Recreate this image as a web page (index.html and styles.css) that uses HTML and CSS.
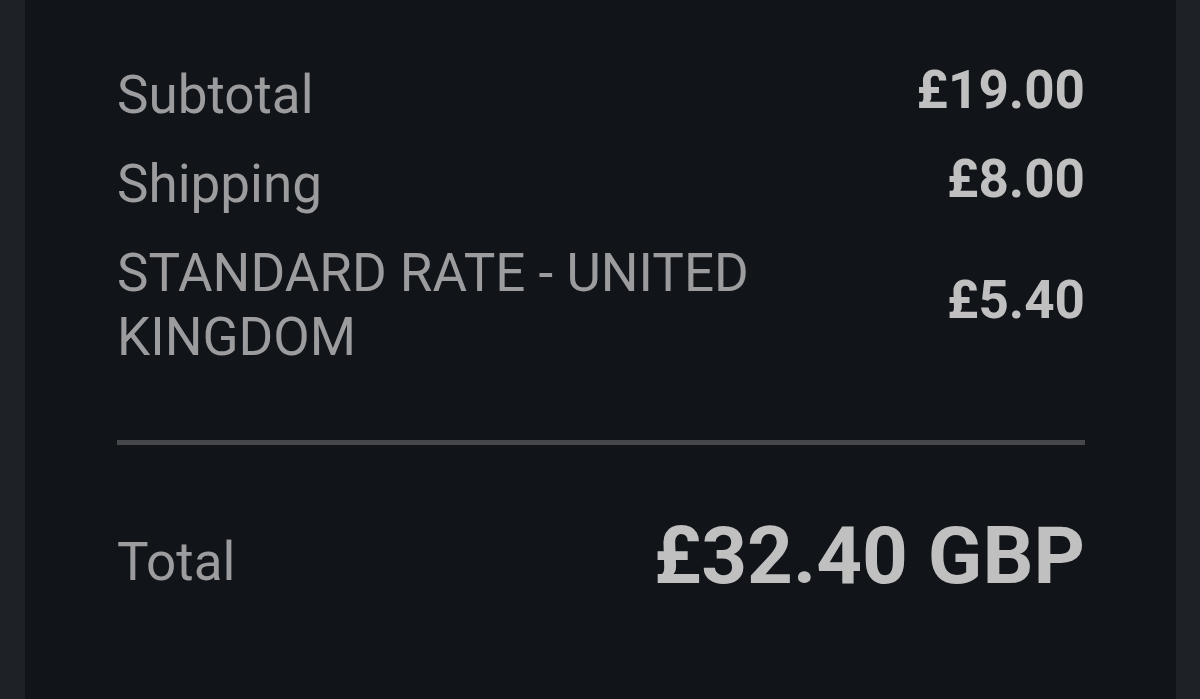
FILE: index.html
```html
<!DOCTYPE html>
<html lang="en">
<head>
    <meta charset="UTF-8">
    <meta name="viewport" content="width=device-width, initial-scale=1.0">
    <title>Order summary</title>
    <link rel="stylesheet" href="styles.css">
</head>
<body>
    <div class="page">
        <div class="edge"></div>
        <div class="summary">
            <div class="lines">
                <div class="row">
                    <span class="label">Subtotal</span>
                    <span class="amount">£19.00</span>
                </div>
                <div class="row">
                    <span class="label">Shipping</span>
                    <span class="amount">£8.00</span>
                </div>
                <div class="row">
                    <span class="label rate">STANDARD RATE - UNITED KINGDOM</span>
                    <span class="amount">£5.40</span>
                </div>
            </div>
            <div class="divider"></div>
            <div class="row total">
                <span class="label">Total</span>
                <span class="amount">£32.40 GBP</span>
            </div>
        </div>
        <div class="edge"></div>
    </div>
</body>
</html>
```

FILE: styles.css
```css
body {
    margin: 0;
    background-color: #1e2126;
    font-family: Roboto, "Liberation Sans", sans-serif;
}

.page {
    display: flex;
    height: 699px;
    overflow: hidden;
}

.edge {
    width: 25px;
    flex-shrink: 0;
    background-color: #1e2126;
}

.edge:last-child {
    width: 24px;
}

.summary {
    flex: 1;
    background-color: #111419;
    padding: 63px 91px 0 92px;
}

.lines {
    display: flex;
    flex-direction: column;
    gap: 25px;
}

.row {
    display: flex;
    justify-content: space-between;
    align-items: center;
}

.label {
    font-size: 53px;
    line-height: 64px;
    color: #9c9c9e;
}

.label.rate {
    max-width: 680px;
}

.amount {
    font-size: 53px;
    line-height: 64px;
    font-weight: 700;
    color: #c0c0c0;
    margin-top: -10px;
    white-space: nowrap;
}

.divider {
    height: 5px;
    margin-top: 71px;
    background-color: #45474b;
}

.total {
    margin-top: 82px;
}

.total .amount {
    font-size: 80px;
    line-height: 80px;
    margin-top: -11px;
}
```
